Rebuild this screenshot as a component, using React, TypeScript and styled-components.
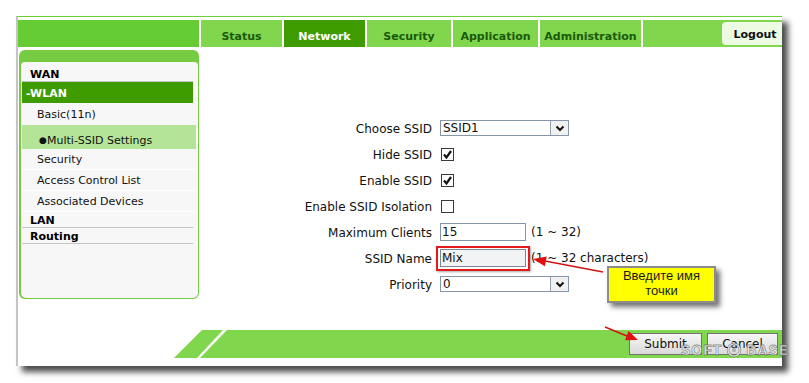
import React from 'react';
import styled, { createGlobalStyle } from 'styled-components';

const GlobalStyle = createGlobalStyle`
  html, body {
    margin: 0;
    padding: 0;
    background: #ffffff;
  }
  body {
    font-family: 'DejaVu Sans', Verdana, sans-serif;
    color: #111;
  }
`;

const green = '#80d64c';
const darkGreen = '#3f9c00';

const Page = styled.div`
  position: relative;
  width: 809px;
  height: 383px;
  overflow: hidden;
  padding: 16px 0 0 16px;
  box-sizing: border-box;
`;

const Window = styled.div`
  width: 766px;
  height: 350px;
  box-sizing: border-box;
  border-left: 2px solid #c4c4c4;
  border-top: 1px solid #6ccf3a;
  background: #fff;
  box-shadow: 6px 6px 6px rgba(0, 0, 0, 0.7);
  display: flex;
  flex-direction: column;
`;

const TopBar = styled.div`
  margin-top: 3px;
  height: 27px;
  display: flex;
  gap: 2px;
`;

const BrandBlock = styled.div`
  width: 181px;
  background: #66cc33;
`;

const Tab = styled.div<{ $w: number; $active?: boolean }>`
  width: ${(p) => p.$w}px;
  background: ${(p) => (p.$active ? darkGreen : green)};
  color: ${(p) => (p.$active ? '#ffffff' : '#1b5a0a')};
  font-size: 11px;
  font-weight: bold;
  display: flex;
  align-items: center;
  justify-content: center;
  padding-top: 5px;
  box-sizing: border-box;
`;

const TabFill = styled.div`
  flex: 1;
  background: ${green};
  display: flex;
  justify-content: flex-end;
  align-items: flex-start;
  padding-top: 2px;
`;

const LogoutButton = styled.div`
  width: 60px;
  height: 23px;
  background: #ecfbe1;
  border-radius: 4px 0 0 4px;
  font-size: 11px;
  font-weight: bold;
  color: #111;
  display: flex;
  align-items: center;
  justify-content: center;
  padding: 1px 0 0 6px;
  box-sizing: border-box;
`;

const Body = styled.div`
  flex: 1;
  display: flex;
  min-height: 0;
`;

const Sidebar = styled.div`
  margin: 3px 0 0 1px;
  width: 180px;
  height: 249px;
  background: #76cb42;
  border-radius: 6px;
  padding: 12px 1px 1px 2px;
  box-sizing: border-box;
`;

const SideInner = styled.div`
  height: 100%;
  background: #f7f7f7;
  border-radius: 4px 4px 5px 5px;
  padding: 0 2px 0 1px;
  box-sizing: border-box;
`;

const SectionHead = styled.div<{ $top?: number }>`
  margin-right: 3px;
  padding: ${(p) => p.$top ?? 2}px 0 0 8px;
  line-height: 13px;
  font-size: 11px;
  font-weight: bold;
  color: #000;
  border-bottom: 1px solid #c4c4c4;
`;

const OpenSection = styled.div`
  margin-right: 3px;
  height: 21px;
  line-height: 19px;
  padding: 2px 0 0 4px;
  box-sizing: border-box;
  background: ${darkGreen};
  color: #fff;
  font-size: 11px;
  font-weight: bold;
`;

const SideItem = styled.div<{ $h: number; $pt?: number; $current?: boolean; $line?: boolean }>`
  height: ${(p) => p.$h}px;
  box-sizing: border-box;
  padding: ${(p) => p.$pt ?? 0}px 0 0 ${(p) => (p.$current ? 17 : 15)}px;
  line-height: ${(p) => p.$h - (p.$pt ?? 0) - (p.$line ? 1 : 0)}px;
  font-size: 11px;
  color: #111;
  background: ${(p) => (p.$current ? '#b4e497' : 'transparent')};
  border-bottom: ${(p) => (p.$line ? '1px solid #ffffff' : 'none')};
  display: flex;
  align-items: flex-start;
`;

const Bullet = styled.span`
  width: 8px;
  font-size: 9px;
`;

const Main = styled.div`
  flex: 1;
  padding-top: 68px;
`;

const FormGrid = styled.div`
  display: grid;
  grid-template-columns: 233px auto;
  column-gap: 8px;
  grid-auto-rows: 26px;
  align-items: center;
  font-size: 12px;
`;

const Label = styled.div`
  text-align: right;
  color: #111;
  white-space: nowrap;
  padding-top: 1px;
`;

const Control = styled.div`
  display: flex;
  align-items: center;
  gap: 5px;
  white-space: nowrap;
`;

const SelectBox = styled.div`
  position: relative;
  width: 129px;
  height: 16px;
  box-sizing: border-box;
  border: 1px solid #8496a8;
  background: #fff;
  font-size: 12px;
  line-height: 14px;
  padding-left: 2px;
`;

const SelectArrow = styled.div`
  position: absolute;
  right: 0;
  top: 0;
  width: 18px;
  height: 14px;
  box-sizing: border-box;
  border-left: 1px solid #98a2ac;
  background: #f1f1f1;
  display: flex;
  align-items: center;
  justify-content: center;
`;

const CheckBox = styled.div`
  width: 13px;
  height: 13px;
  box-sizing: border-box;
  border: 1px solid #3a3a3a;
  background: #fff;
  margin: 1px 0 0 1px;
  display: flex;
  align-items: center;
  justify-content: center;
`;

const TextBox = styled.div<{ $tinted?: boolean }>`
  width: 86px;
  height: 18px;
  box-sizing: border-box;
  border: 1px solid ${(p) => (p.$tinted ? '#7a8794' : '#8496a8')};
  background: ${(p) => (p.$tinted ? '#f1f3f4' : '#fff')};
  font-size: 12px;
  line-height: 16px;
  padding-left: 1px;
`;

const Marked = styled.div`
  position: relative;
  &::after {
    content: '';
    position: absolute;
    left: -4px;
    right: -4px;
    top: -3px;
    bottom: -4px;
    border: 2px solid #e31b1b;
    box-shadow: 1px 1px 2px rgba(0, 0, 0, 0.35);
  }
`;

const Hint = styled.span`
  color: #111;
`;

const Footer = styled.div`
  height: 28px;
  margin-bottom: 8px;
  display: flex;
  padding-left: 156px;
`;

const Slash = styled.div`
  width: 49px;
  background: ${green};
  clip-path: polygon(28px 0, 49px 0, 23px 100%, 0 100%);
`;

const ActionBar = styled.div`
  flex: 1;
  margin-left: -23px;
  background: ${green};
  clip-path: polygon(27px 0, 100% 0, 100% 100%, 0 100%);
  display: flex;
  justify-content: flex-end;
  align-items: center;
  gap: 5px;
  padding-right: 4px;
`;

const Button = styled.div<{ $w: number }>`
  width: ${(p) => p.$w}px;
  height: 22px;
  box-sizing: border-box;
  border: 1px solid #737373;
  background: linear-gradient(#f6f6f6, #dadada);
  font-size: 12px;
  color: #111;
  display: flex;
  align-items: center;
  justify-content: center;
`;

const Callout = styled.div`
  position: absolute;
  left: 607px;
  top: 266px;
  width: 109px;
  height: 37px;
  box-sizing: border-box;
  background: #ffff00;
  border: 2px solid #8c8c8c;
  box-shadow: 4px 4px 5px rgba(0, 0, 0, 0.55);
  font-family: 'Liberation Sans', Arial, sans-serif;
  font-size: 13px;
  line-height: 15px;
  text-align: center;
  color: #1a1a1a;
`;

const ArrowLayer = styled.svg`
  position: absolute;
  left: 0;
  top: 0;
  pointer-events: none;
`;

const Watermark = styled.div`
  position: absolute;
  left: 681px;
  top: 342px;
  display: flex;
  align-items: center;
  gap: 4px;
  font-family: 'Liberation Sans', Arial, sans-serif;
  font-size: 14px;
  font-weight: bold;
  letter-spacing: 1px;
  color: rgba(255, 255, 255, 0.8);
  -webkit-text-stroke: 0.8px rgba(100, 100, 100, 0.7);
  pointer-events: none;
`;

const tabs = [
  { label: 'Status', w: 81 },
  { label: 'Network', w: 81, active: true },
  { label: 'Security', w: 84 },
  { label: 'Application', w: 85 },
  { label: 'Administration', w: 101 },
];

const Chevron = () => (
  <svg width="10" height="7" viewBox="0 0 10 7">
    <polyline points="1.5,1.5 5,5 8.5,1.5" fill="none" stroke="#111" strokeWidth="2" />
  </svg>
);

const Check = () => (
  <svg width="11" height="11" viewBox="0 0 11 11">
    <polyline points="2,5.5 4.5,8.5 9,2" fill="none" stroke="#111" strokeWidth="2.2" />
  </svg>
);

const Select = ({ value }: { value: string }) => (
  <SelectBox>
    {value}
    <SelectArrow>
      <Chevron />
    </SelectArrow>
  </SelectBox>
);

export default function App() {
  return (
    <Page>
      <GlobalStyle />
      <Window>
        <TopBar>
          <BrandBlock />
          {tabs.map((t) => (
            <Tab key={t.label} $w={t.w} $active={t.active}>
              {t.label}
            </Tab>
          ))}
          <TabFill>
            <LogoutButton>Logout</LogoutButton>
          </TabFill>
        </TopBar>

        <Body>
          <Sidebar>
            <SideInner>
              <SectionHead $top={6}>WAN</SectionHead>
              <OpenSection>-WLAN</OpenSection>
              <SideItem $h={22} $pt={1}>Basic(11n)</SideItem>
              <SideItem $h={24} $pt={7} $current>
                <Bullet>●</Bullet>Multi-SSID Settings
              </SideItem>
              <SideItem $h={21} $pt={2} $line>Security</SideItem>
              <SideItem $h={21} $pt={2} $line>Access Control List</SideItem>
              <SideItem $h={21} $pt={2} $line>Associated Devices</SideItem>
              <SectionHead>LAN</SectionHead>
              <SectionHead>Routing</SectionHead>
            </SideInner>
          </Sidebar>

          <Main>
            <FormGrid>
              <Label>Choose SSID</Label>
              <Control>
                <Select value="SSID1" />
              </Control>

              <Label>Hide SSID</Label>
              <Control>
                <CheckBox>
                  <Check />
                </CheckBox>
              </Control>

              <Label>Enable SSID</Label>
              <Control>
                <CheckBox>
                  <Check />
                </CheckBox>
              </Control>

              <Label>Enable SSID Isolation</Label>
              <Control>
                <CheckBox />
              </Control>

              <Label>Maximum Clients</Label>
              <Control>
                <TextBox>15</TextBox>
                <Hint>(1 ~ 32)</Hint>
              </Control>

              <Label>SSID Name</Label>
              <Control>
                <Marked>
                  <TextBox $tinted>Mix</TextBox>
                </Marked>
                <Hint>(1 ~ 32 characters)</Hint>
              </Control>

              <Label>Priority</Label>
              <Control>
                <Select value="0" />
              </Control>
            </FormGrid>
          </Main>
        </Body>

        <Footer>
          <Slash />
          <ActionBar>
            <Button $w={73}>Submit</Button>
            <Button $w={71}>Cancel</Button>
          </ActionBar>
        </Footer>
      </Window>

      <Callout>
        Введите имя
        <br />
        точки
      </Callout>

      <ArrowLayer width="809" height="383" viewBox="0 0 809 383">
        <g stroke="#d21212" strokeWidth="1.4" fill="#e01010">
          <line x1="603" y1="272" x2="545" y2="261" />
          <polygon points="533,259 546.7,256.5 544.9,266.3" stroke="none" />
          <line x1="605" y1="327" x2="627" y2="336" />
          <polygon points="638,340 625,340.3 628.6,330.9" stroke="none" />
        </g>
      </ArrowLayer>

      <Watermark>
        <span>SOFT</span>
        <svg width="16" height="16" viewBox="0 0 16 16">
          <circle cx="8" cy="8" r="6" fill="none" stroke="rgba(100,100,100,0.7)" strokeWidth="2.5" />
          <circle cx="8" cy="8" r="6" fill="none" stroke="rgba(255,255,255,0.8)" strokeWidth="1.2" />
          <circle cx="8" cy="8" r="2" fill="rgba(140,140,140,0.6)" />
        </svg>
        <span>BASE</span>
      </Watermark>
    </Page>
  );
}
